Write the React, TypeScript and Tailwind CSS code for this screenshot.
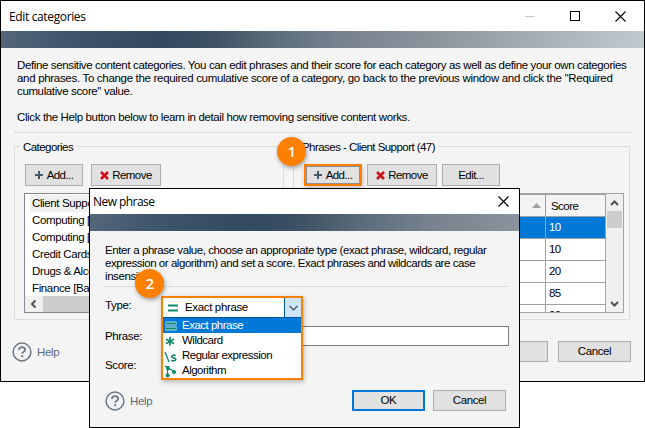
import type { ReactNode } from "react"
import clsx from "clsx"

const categories = [
  "Client Support [47]",
  "Computing [0]",
  "Computing [3]",
  "Credit Cards [12]",
  "Drugs & Alcohol [86]",
  "Finance [Banking]",
]

const scores = ["10", "10", "20", "85", "90"]

function PlusIcon() {
  return (
    <svg width="9" height="9" viewBox="0 0 9 9" className="shrink-0">
      <path d="M4 0v8M0 4h8" stroke="#44586c" strokeWidth="2" />
    </svg>
  )
}

function CrossIcon() {
  return (
    <svg width="9" height="9" viewBox="0 0 9 9" className="shrink-0">
      <path d="M1 1l7 7M8 1L1 8" stroke="#cc1016" strokeWidth="2.6" />
    </svg>
  )
}

function CloseIcon() {
  return (
    <svg width="11" height="11" viewBox="0 0 11 11">
      <path d="M0.5 0.5l10 10M10.5 0.5l-10 10" stroke="#000" strokeWidth="1.1" />
    </svg>
  )
}

function Chevron({ className }: { className?: string }) {
  return (
    <svg width="9" height="6" viewBox="0 0 9 6" className={className}>
      <path d="M1 1l3.5 3.5L8 1" fill="none" stroke="#505050" strokeWidth="2" />
    </svg>
  )
}

function Button({ className, children }: { className?: string; children?: ReactNode }) {
  return (
    <button
      className={clsx(
        "flex shrink-0 items-center justify-center border border-[#adadad] bg-[#e1e1e1] whitespace-nowrap",
        className
      )}
    >
      {children}
    </button>
  )
}

function Banner() {
  return (
    <div className="h-[17px] shrink-0 bg-[linear-gradient(100deg,#54677a_0%,#40566c_10%,#33495f_25%,#3d5264_33%,#5b6b7a_42%,#75818d_52%,#8a929c_66%,#a2a9b2_80%,#b2bac3_91%,#c3c9d0_100%)] bg-[length:645px_17px]" />
  )
}

function Help() {
  return (
    <div className="flex items-center gap-[5px] text-[#5f6b78]">
      <svg width="20" height="20" viewBox="0 0 20 20">
        <circle cx="10" cy="10" r="8.9" fill="none" stroke="#6b7886" strokeWidth="1.5" />
        <path
          d="M6.9 8c0-1.9 1.3-2.9 3.1-2.9s3.1 1 3.1 2.6c0 2.1-2.9 2.2-2.9 4.1"
          fill="none"
          stroke="#6b7886"
          strokeWidth="1.8"
        />
        <rect x="9.2" y="13.2" width="2" height="2" fill="#6b7886" />
      </svg>
      <span className="pt-[2px]">Help</span>
    </div>
  )
}

function Group({ title, className, children }: { title: string; className?: string; children: ReactNode }) {
  return (
    <fieldset className={clsx("h-[180px] min-w-0 border border-[#dcdcdc] tracking-[-0.55px]", className)}>
      <legend className="ml-[5px] h-[13px] px-[3px] leading-[14px] whitespace-nowrap">{title}</legend>
      {children}
    </fieldset>
  )
}

function Badge({ className, children }: { className?: string; children: ReactNode }) {
  return (
    <div
      className={clsx(
        "absolute flex size-[29px] items-center justify-center rounded-full bg-[#ff8000] font-['Open_Sans',sans-serif] text-[15px] font-semibold text-white shadow-[1px_2px_4px_rgba(0,0,0,0.35)]",
        className
      )}
    >
      {children}
    </div>
  )
}

function EqualsIcon({ selected }: { selected?: boolean }) {
  return (
    <svg width="12" height="12" viewBox="0 0 12 12" className="shrink-0">
      {selected && <path d="M0.5 1.5h11v4h-11zM0.5 6.5h11v4h-11z" fill="#b9dff0" />}
      <path d="M1 3.5h10M1 8.5h10" stroke="#138a6c" strokeWidth="2" />
    </svg>
  )
}

function AsteriskIcon() {
  return (
    <svg width="12" height="12" viewBox="0 0 12 12" className="shrink-0">
      <path d="M6 1.8v9M2 4l8 4.8M10 4l-8 4.8" stroke="#138a6c" strokeWidth="1.7" />
    </svg>
  )
}

function RegexIcon() {
  return (
    <svg width="14" height="14" viewBox="0 0 14 14" className="shrink-0">
      <path d="M1 3l4 10" stroke="#138a6c" strokeWidth="1.4" />
      <path
        d="M11.6 6.8c-1.4-1-4-.7-4 .7 0 1.7 4.2 1 4.2 2.8 0 1.7-3 1.9-4.6.8"
        fill="none"
        stroke="#138a6c"
        strokeWidth="1.7"
      />
    </svg>
  )
}

function AlgorithmIcon() {
  return (
    <svg width="14" height="14" viewBox="0 0 14 14" className="shrink-0">
      <path d="M3.5 4v7M1 2l9 5.5" stroke="#138a6c" strokeWidth="1.3" />
      <path d="M1.5 2h4v4h-3z" fill="#138a6c" />
      <circle cx="3.7" cy="11.5" r="2.1" fill="#138a6c" />
      <circle cx="10" cy="8" r="2.1" fill="#138a6c" />
    </svg>
  )
}

function TypeSelect() {
  return (
    <div className="absolute top-[107px] left-[71px] h-[84px] w-[142px] border-2 border-[#ff8000] bg-white shadow-[1px_2px_5px_rgba(0,0,0,0.25)]">
      <div className="flex h-[19px] items-center">
        <div className="ml-[4px] flex w-[117px] items-center gap-[6px]">
          <EqualsIcon />
          <span className="tracking-[-0.35px]">Exact phrase</span>
        </div>
        <div className="flex h-full flex-1 items-center justify-center border-l border-[#005499] bg-[#cce4f7]">
          <svg width="9" height="6" viewBox="0 0 9 6">
            <path d="M0.5 0.8l4 4 4-4" fill="none" stroke="#444" strokeWidth="1.2" />
          </svg>
        </div>
      </div>
      <ul className="leading-[15px] tracking-[-0.5px]">
        <li className="flex h-[16px] items-center gap-[5px] border-t border-[#005499] bg-[#0078d7] pl-[2px] text-white">
          <EqualsIcon selected />
          <span>Exact phrase</span>
        </li>
        <li className="flex h-[15px] items-center gap-[5px] pl-px">
          <AsteriskIcon />
          <span className="pl-px">Wildcard</span>
        </li>
        <li className="flex h-[15px] items-center gap-[4px] pl-px">
          <RegexIcon />
          <span>Regular expression</span>
        </li>
        <li className="flex h-[15px] items-center gap-[4px] pl-px">
          <AlgorithmIcon />
          <span>Algorithm</span>
        </li>
      </ul>
    </div>
  )
}

function NewPhraseDialog() {
  return (
    <div className="absolute top-[188px] left-[89px] flex h-[240px] w-[431px] flex-col border border-black bg-[#f4f4f4]">
      <div className="flex h-[25px] shrink-0 items-center justify-between bg-white pr-[10px] pl-[3px]">
        <span className="font-['Open_Sans',sans-serif] text-[12px] tracking-[-0.55px]">New phrase</span>
        <CloseIcon />
      </div>
      <Banner />
      <p className="mt-[13px] ml-[15px] leading-[13px] tracking-[-0.42px] whitespace-nowrap">
        Enter a phrase value, choose an appropriate type (exact phrase, wildcard, regular
        <br />
        <span className="tracking-[-0.45px]">
          expression or algorithm) and set a score. Exact phrases and wildcards are case
        </span>
        <br />
        insensitive.
      </p>
      <div className="mt-[3px] mr-[12px] ml-[14px] border-t border-dotted border-[#c4c4c4]" />
      <div className="mt-[8px] ml-[15px] h-[20px] leading-[20px]">Type:</div>
      <div className="mt-[11px] ml-[15px] flex h-[20px] leading-[20px]">
        <label className="w-[57px]">Phrase:</label>
        <div className="h-[20px] w-[347px] border border-[#7a7a7a] bg-white" />
      </div>
      <div className="mt-[9px] ml-[15px] h-[20px] leading-[20px]">Score:</div>
      <div className="mt-[15px] flex items-center pr-[13px] pl-[15px]">
        <Help />
        <Button className="ml-auto h-[21px] w-[73px] border-2 !border-[#0078d7]">OK</Button>
        <Button className="ml-[8px] h-[21px] w-[73px]">Cancel</Button>
      </div>
      <TypeSelect />
      <Badge className="top-[80px] left-[45px]">2</Badge>
    </div>
  )
}

export default function App() {
  return (
    <div className="relative h-[428px] w-[645px] overflow-hidden bg-white font-['Liberation_Sans',sans-serif] text-[11.5px] leading-[13px] tracking-[-0.37px] text-black">
      <div className="flex h-[382px] w-[645px] flex-col border border-black bg-[#f4f4f4]">
        <div className="flex h-[30px] shrink-0 items-center bg-white pr-[18px] pl-[8px]">
          <span className="flex-1 font-['Open_Sans',sans-serif] text-[12px] tracking-[-0.36px]">Edit categories</span>
          <div className="h-px w-[10px] bg-[#c8c8c8]" />
          <div className="ml-[35px] size-[10px] border border-black" />
          <div className="ml-[35px]">
            <CloseIcon />
          </div>
        </div>
        <Banner />
        <p className="mt-[11px] ml-[16px] leading-[13px] whitespace-nowrap">
          Define sensitive content categories. You can edit phrases and their score for each category as well as
          define your own categories
          <br />
          <span className="tracking-[-0.31px]">
            and phrases. To change the required cumulative score of a category, go back to the previous window and
            click the "Required
          </span>
          <br />
          cumulative score" value.
        </p>
        <p className="mt-[13px] ml-[16px] whitespace-nowrap">
          Click the Help button below to learn in detail how removing sensitive content works.
        </p>
        <div className="mt-[8px] mr-[12px] ml-[14px] border-t border-dotted border-[#c4c4c4]" />
        <div className="mt-[7px] flex gap-[9px] pl-[13px]">
          <Group title="Categories" className="w-[270px]">
            <div className="mt-[11px] ml-[10px] flex gap-[8px]">
              <Button className="h-[22px] w-[58px] gap-[3px]">
                <PlusIcon />
                Add...
              </Button>
              <Button className="h-[22px] w-[70px] gap-[3px]">
                <CrossIcon />
                Remove
              </Button>
            </div>
            <div className="mt-[7px] ml-[9px] h-[120px] w-[250px] border border-[#828790] bg-white pt-px">
              <ul className="h-[101px] overflow-hidden pl-[5px] leading-[17px] tracking-[-0.37px] whitespace-nowrap">
                {categories.map((name, i) => (
                  <li key={name} className={clsx("h-[17px] pl-[2px]", i === 0 && "bg-[#f0f0f0]")}>
                    {name}
                  </li>
                ))}
              </ul>
              <div className="flex h-[16px] items-center bg-[#f0f0f0]">
                <Chevron className="ml-[4px] rotate-90" />
                <div className="ml-[5px] h-full w-[180px] bg-[#cdcdcd]" />
              </div>
            </div>
          </Group>
          <Group title="Phrases - Client Support (47)" className="w-[337px]">
            <div className="mt-[11px] ml-[10px] flex gap-[5px]">
              <Button className="h-[22px] w-[58px] gap-[3px] border-2 !border-[#ff8000] shadow-[1px_2px_5px_rgba(0,0,0,0.2),inset_0_0_0_1px_#909090]">
                <PlusIcon />
                Add...
              </Button>
              <Button className="h-[22px] w-[70px] gap-[3px]">
                <CrossIcon />
                Remove
              </Button>
              <Button className="h-[22px] w-[58px]">Edit...</Button>
            </div>
            <div className="mt-[7px] ml-[9px] flex h-[120px] w-[321px] border border-[#a0a4aa] bg-white">
              <div className="h-full flex-1 overflow-hidden">
                <div className="flex h-[23px] border-y border-[#a0a0a0] bg-[#f4f4f4] leading-[22px]">
                  <div className="flex w-[242px] items-center justify-end border-r border-[#a0a0a0] pr-[4px]">
                    <svg width="9" height="5" viewBox="0 0 9 5">
                      <path d="M0 5L4.5 0 9 5z" fill="#a0a0a0" />
                    </svg>
                  </div>
                  <div className="flex-1 border-r border-[#a0a0a0] pl-[5px]">Score</div>
                </div>
                {scores.map((score, i) => (
                  <div
                    key={i}
                    className={clsx("flex h-[22px] border-b border-[#a0a0a0] leading-[21px]", i === 0 && "bg-[#0078d7] text-white")}
                  >
                    <div className="w-[242px] border-r border-[#a0a0a0]" />
                    <div className="flex-1 border-r border-[#a0a0a0] pl-[3px]">{score}</div>
                  </div>
                ))}
              </div>
              <div className="flex w-[17px] flex-col items-center bg-[#f0f0f0]">
                <Chevron className="mt-[6px] rotate-180" />
                <div className="mt-[5px] h-[17px] w-[15px] bg-[#cdcdcd]" />
                <Chevron className="mt-auto mb-[5px]" />
              </div>
            </div>
          </Group>
        </div>
        <div className="mt-[21px] flex items-center pr-[13px] pl-[11px]">
          <Help />
          <Button className="ml-auto h-[21px] w-[73px]">OK</Button>
          <Button className="ml-[10px] h-[21px] w-[73px]">Cancel</Button>
        </div>
      </div>
      <Badge className="top-[137px] left-[277px]">1</Badge>
      <NewPhraseDialog />
    </div>
  )
}
